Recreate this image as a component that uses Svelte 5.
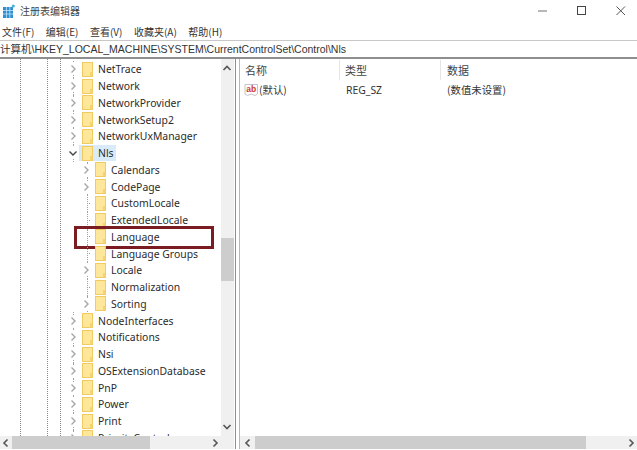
<script lang="ts">
    type Row = { label: string; depth: number; arrow?: "right" | "down"; selected?: boolean; marked?: boolean };

    const menus = ["文件(F)", "编辑(E)", "查看(V)", "收藏夹(A)", "帮助(H)"];

    const rows: Row[] = [
        { label: "NetTrace", depth: 0, arrow: "right" },
        { label: "Network", depth: 0, arrow: "right" },
        { label: "NetworkProvider", depth: 0, arrow: "right" },
        { label: "NetworkSetup2", depth: 0, arrow: "right" },
        { label: "NetworkUxManager", depth: 0, arrow: "right" },
        { label: "Nls", depth: 0, arrow: "down", selected: true },
        { label: "Calendars", depth: 1, arrow: "right" },
        { label: "CodePage", depth: 1, arrow: "right" },
        { label: "CustomLocale", depth: 1 },
        { label: "ExtendedLocale", depth: 1 },
        { label: "Language", depth: 1, marked: true },
        { label: "Language Groups", depth: 1 },
        { label: "Locale", depth: 1, arrow: "right" },
        { label: "Normalization", depth: 1 },
        { label: "Sorting", depth: 1, arrow: "right" },
        { label: "NodeInterfaces", depth: 0, arrow: "right" },
        { label: "Notifications", depth: 0, arrow: "right" },
        { label: "Nsi", depth: 0, arrow: "right" },
        { label: "OSExtensionDatabase", depth: 0, arrow: "right" },
        { label: "PnP", depth: 0, arrow: "right" },
        { label: "Power", depth: 0, arrow: "right" },
        { label: "Print", depth: 0, arrow: "right" },
        { label: "PriorityControl", depth: 0, arrow: "right" },
    ];
</script>

<style>
    :global(body) {
        margin: 0;
        background: #fff;
    }

    .window {
        width: 637px;
        height: 450px;
        overflow: hidden;
        display: flex;
        flex-direction: column;
        font-family: "Noto Sans", "Noto Sans CJK SC", sans-serif;
        font-size: 10.4px;
        color: #2b2b2b;
    }

    .titlebar {
        height: 21px;
        flex: none;
        display: flex;
        align-items: center;
        padding: 0 11px 0 3px;
        gap: 5px;
        font-size: 10px;
        color: #444;
    }

    .logo {
        flex: none;
    }

    .title {
        flex: 1;
        font-family: "Noto Sans CJK SC", sans-serif;
    }

    .winbtns {
        display: flex;
        gap: 29px;
        align-items: center;
    }

    .winbtns svg {
        display: block;
    }

    .menubar {
        height: 19px;
        flex: none;
        display: flex;
        align-items: center;
        gap: 11.5px;
        padding: 1px 0 0 2px;
        box-sizing: border-box;
        font-size: 10px;
        color: #333;
        font-family: "Noto Sans CJK SC", sans-serif;
    }

    .address {
        height: 19px;
        flex: none;
        box-sizing: border-box;
        border-top: 1px solid #c8c8c8;
        border-bottom: 2px solid #8e8e8e;
        white-space: nowrap;
        overflow: hidden;
        line-height: 16px;
        font-size: 10.5px;
        color: #333;
        font-family: "Liberation Sans", "Noto Sans CJK SC", sans-serif;
    }

    .panes {
        flex: 1;
        min-height: 0;
        display: flex;
        padding-bottom: 1px;
    }

    .tree-pane {
        width: 235px;
        flex: none;
        display: grid;
        grid-template-columns: 221px 13px;
        grid-template-rows: 1fr 13px;
        padding-right: 1px;
        box-sizing: border-box;
    }

    .tree {
        position: relative;
        overflow: hidden;
        padding-top: 2px;
    }

    .guide {
        position: absolute;
        top: 0;
        bottom: 0;
        width: 0;
        border-left: 1px dotted #8a8a8a;
    }

    .row {
        position: relative;
        height: 16.76px;
        display: flex;
        align-items: center;
        white-space: nowrap;
        padding-left: 67px;
    }

    .row::before {
        content: "";
        position: absolute;
        left: 73px;
        top: 0;
        bottom: 0;
        border-left: 1px dotted #a0a0a0;
    }

    .row.d1 {
        padding-left: 80px;
    }

    .row.d1::before {
        left: 87px;
    }

    .arrow {
        width: 12px;
        height: 12px;
        flex: none;
        position: relative;
        background: #fff;
    }

    .dash {
        width: 12px;
        height: 1px;
        flex: none;
        position: relative;
        background: linear-gradient(to right, transparent 7px, #999 7px, #999 8px, transparent 8px, transparent 9px, #999 9px, #999 10px, transparent 10px);
    }

    .cell {
        position: relative;
        display: flex;
        align-items: center;
        gap: 5px;
        height: 16px;
        padding: 0 2px 0 3px;
    }

    .selected {
        background: #d9ebf9;
    }

    .folder {
        flex: none;
    }

    .highlight {
        position: absolute;
        left: 74px;
        top: -3px;
        width: 140px;
        height: 23px;
        box-sizing: border-box;
        border: 3px solid #7b1c22;
    }

    .vscroll {
        background: #f0f0f0;
        display: flex;
        flex-direction: column;
        justify-content: space-between;
        position: relative;
        padding: 4px 0;
    }

    .vthumb {
        position: absolute;
        left: 0;
        right: 0;
        top: 179px;
        height: 43px;
        background: #cdcdcd;
    }

    .hscroll {
        background: #f0f0f0;
        display: flex;
        align-items: center;
    }

    .hthumb {
        height: 100%;
        width: 138px;
        background: #cdcdcd;
    }

    .spacer {
        flex: 1;
    }

    .corner {
        background: #f0f0f0;
    }

    .btn {
        flex: none;
        display: flex;
        align-items: center;
        justify-content: center;
        width: 12px;
        height: 10px;
    }

    .split {
        width: 5px;
        flex: none;
        box-sizing: border-box;
        border-left: 1px solid #8e8e8e;
        border-right: 1px solid #b8b8b8;
    }

    .list-pane {
        flex: 1;
        min-width: 0;
        display: flex;
        flex-direction: column;
    }

    .list {
        flex: 1;
        min-height: 0;
    }

    .head {
        display: flex;
        height: 20px;
        margin: 1px 0 1px;
        align-items: center;
        font-family: "Noto Sans CJK SC", sans-serif;
        color: #444;
        font-size: 11px;
    }

    .col-name {
        width: 100px;
        padding-left: 5px;
        box-sizing: border-box;
        border-right: 1px solid #e5e5e5;
        height: 100%;
        display: flex;
        align-items: center;
    }

    .col-type {
        width: 101px;
        padding-left: 5px;
        box-sizing: border-box;
        border-right: 1px solid #e5e5e5;
        height: 100%;
        display: flex;
        align-items: center;
    }

    .col-data {
        padding-left: 6px;
        display: flex;
        align-items: center;
    }

    .entry {
        display: flex;
        height: 17px;
        align-items: center;
        color: #333;
    }

    .entry .col-name,
    .entry .col-type {
        border-right-color: transparent;
    }

    .entry .col-name {
        gap: 0;
        padding-left: 4px;
    }

    .entry .col-type {
        padding-left: 6px;
    }

    .cjk {
        font-family: "Noto Sans CJK SC", sans-serif;
    }

    .list-h {
        height: 13px;
        flex: none;
        background: #f0f0f0;
        display: flex;
        align-items: center;
    }

    .list-h .btn:first-child {
        width: 15px;
    }

    .list-thumb {
        width: 331px;
        height: 100%;
        background: #cdcdcd;
    }
</style>

<div class="window">
    <div class="titlebar">
        <svg class="logo" width="12" height="14" viewBox="0 0 12 14">
            <rect x="0" y="3" width="10" height="11" fill="#2f8fd0" />
            <path d="M3.5 3V14M6.8 3V14M0 6.5H10M0 10H10" stroke="#bfe2f5" stroke-width="0.8" />
            <circle cx="10.3" cy="2" r="1.6" fill="#4fb0dc" />
        </svg>
        <span class="title">注册表编辑器</span>
        <span class="winbtns">
            <svg width="10" height="10" viewBox="0 0 10 10"><path d="M0 5H9" stroke="#999" stroke-width="1.4" /></svg>
            <svg width="10" height="10" viewBox="0 0 10 10"><rect x="0.5" y="0.5" width="8" height="8" fill="none" stroke="#444" /></svg>
            <svg width="10" height="10" viewBox="0 0 10 10"><path d="M0.5 0.5L9 9M9 0.5L0.5 9" stroke="#555" /></svg>
        </span>
    </div>

    <div class="menubar">
        {#each menus as menu}
            <span>{menu}</span>
        {/each}
    </div>

    <div class="address">计算机\HKEY_LOCAL_MACHINE\SYSTEM\CurrentControlSet\Control\Nls</div>

    <div class="panes">
        <div class="tree-pane">
            <div class="tree">
                <span class="guide" style="left: 20px"></span>
                <span class="guide" style="left: 47px"></span>
                <span class="guide" style="left: 60px"></span>
                {#each rows as row}
                    <div class="row" class:d1={row.depth === 1}>
                        {#if row.arrow === "right"}
                            <svg class="arrow" viewBox="0 0 12 12"><path d="M4.5 2.5L8 6L4.5 9.5" fill="none" stroke="#a6a6a6" stroke-width="1.4" /></svg>
                        {:else if row.arrow === "down"}
                            <svg class="arrow" viewBox="0 0 12 12"><path d="M2.5 4.5L6 8L9.5 4.5" fill="none" stroke="#444" stroke-width="1.4" /></svg>
                        {:else}
                            <span class="dash"></span>
                        {/if}
                        <span class="cell" class:selected={row.selected}>
                            <svg class="folder" width="11" height="15" viewBox="0 0 11 15">
                                <rect x="0.5" y="0.5" width="10" height="14" fill="#fee79a" stroke="#f0cb62" />
                                <rect x="8" y="10" width="2.5" height="4.5" fill="#f6d36d" />
                            </svg>
                            <span>{row.label}</span>
                        </span>
                        {#if row.marked}
                            <div class="highlight"></div>
                        {/if}
                    </div>
                {/each}
            </div>
            <div class="vscroll">
                <span class="btn"><svg width="10" height="8" viewBox="0 0 10 8"><path d="M1.5 6L5 2.5L8.5 6" fill="none" stroke="#555" stroke-width="1.6" /></svg></span>
                <div class="vthumb"></div>
                <span class="btn"><svg width="10" height="8" viewBox="0 0 10 8"><path d="M1.5 2L5 5.5L8.5 2" fill="none" stroke="#555" stroke-width="1.6" /></svg></span>
            </div>
            <div class="hscroll">
                <span class="btn"><svg width="8" height="10" viewBox="0 0 8 10"><path d="M5.5 1.5L2 5L5.5 8.5" fill="none" stroke="#555" stroke-width="1.6" /></svg></span>
                <div class="hthumb"></div>
                <span class="spacer"></span>
                <span class="btn"><svg width="8" height="10" viewBox="0 0 8 10"><path d="M2.5 1.5L6 5L2.5 8.5" fill="none" stroke="#555" stroke-width="1.6" /></svg></span>
            </div>
            <div class="corner"></div>
        </div>

        <div class="split"></div>

        <div class="list-pane">
            <div class="list">
                <div class="head">
                    <span class="col-name">名称</span>
                    <span class="col-type">类型</span>
                    <span class="col-data">数据</span>
                </div>
                <div class="entry">
                    <span class="col-name">
                        <svg width="15" height="15" viewBox="0 0 15 15">
                            <path d="M1 2.5H13.5V12L11 13.5L7 12L3.5 13.5L1 12Z" fill="#fff" stroke="#c4c4c4" />
                            <text x="7.2" y="10" font-size="8.5" font-weight="700" text-anchor="middle" fill="#cf3a28" font-family="Liberation Sans">ab</text>
                        </svg>
                        <span class="cjk">(默认)</span>
                    </span>
                    <span class="col-type">REG_SZ</span>
                    <span class="col-data cjk">(数值未设置)</span>
                </div>
            </div>
            <div class="list-h">
                <span class="btn"><svg width="8" height="10" viewBox="0 0 8 10"><path d="M5.5 1.5L2 5L5.5 8.5" fill="none" stroke="#555" stroke-width="1.6" /></svg></span>
                <div class="list-thumb"></div>
                <span class="spacer"></span>
                <span class="btn"><svg width="8" height="10" viewBox="0 0 8 10"><path d="M2.5 1.5L6 5L2.5 8.5" fill="none" stroke="#555" stroke-width="1.6" /></svg></span>
            </div>
        </div>
    </div>
</div>
